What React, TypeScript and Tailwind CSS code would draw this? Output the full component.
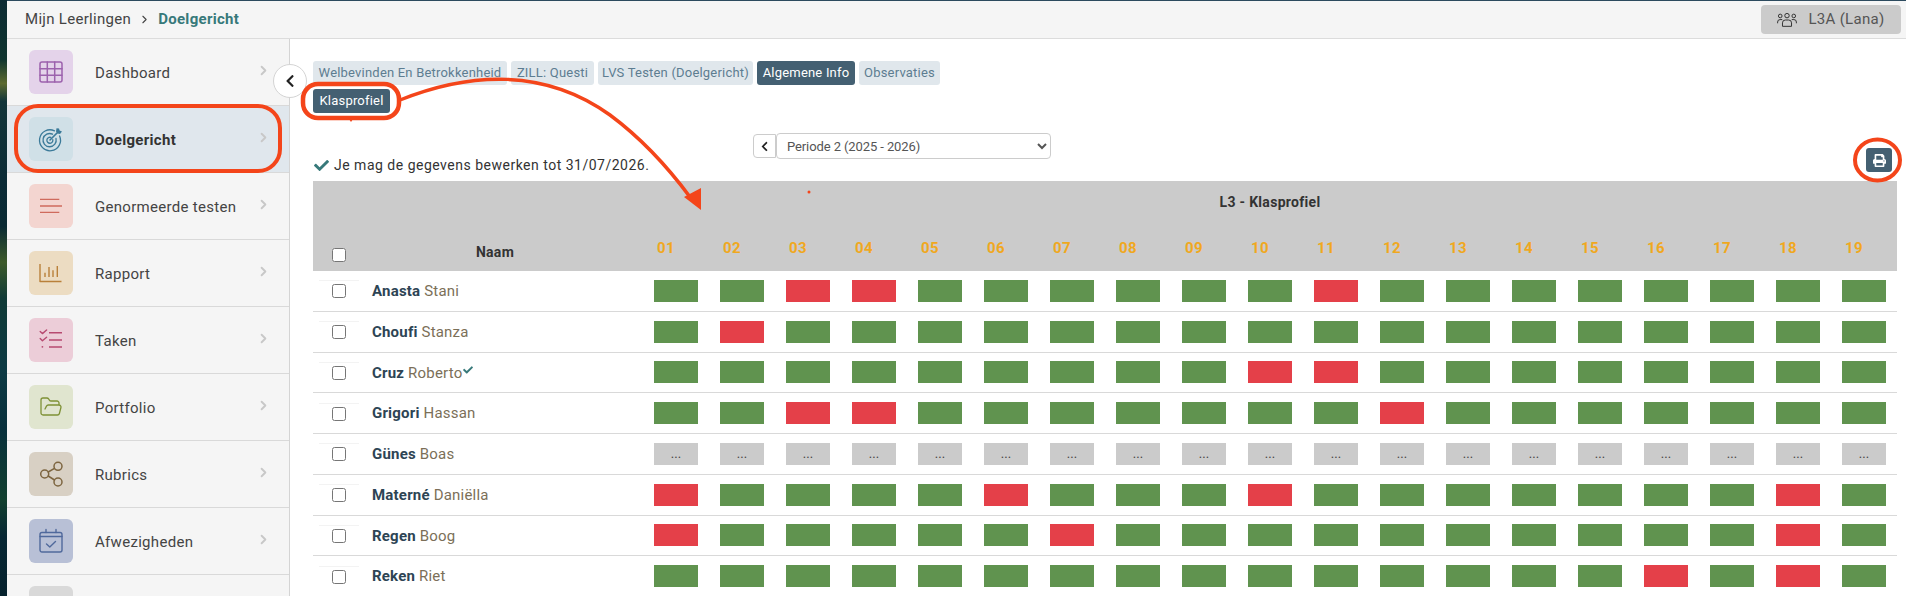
import type { ReactNode } from "react";
import { ChevronRight, FolderOpen } from "lucide-react";
import { FaCheck, FaChevronLeft, FaPrint } from "react-icons/fa";

function Ico({ children, sw = 1.4 }: { children: ReactNode; sw?: number }) {
  return (
    <svg width="24" height="24" viewBox="0 0 24 24" fill="none" stroke="currentColor" strokeWidth={sw} strokeLinecap="round" strokeLinejoin="round" className="overflow-visible">
      {children}
    </svg>
  );
}

const menu: { label: string; icon?: ReactNode; box: string; color: string; active?: boolean }[] = [
  {
    label: "Dashboard",
    box: "bg-[#e4d3ea]",
    color: "text-[#9c62ad]",
    icon: (
      <Ico sw={1.5}>
        <rect x="1" y="2" width="22" height="20" rx="2" />
        <path d="M8.3 2v20M15.7 2v20M1 8.7h22M1 15.3h22" />
      </Ico>
    ),
  },
  {
    label: "Doelgericht",
    box: "bg-[#d0e0e7]",
    color: "text-[#3b7a99]",
    active: true,
    icon: (
      <Ico sw={1.3}>
        <path d="M15.5 3.8A10.5 10.5 0 1 0 20.6 9" />
        <path d="M13.5 7.2A6.6 6.6 0 1 0 17 11.5" />
        <path d="M11.8 10.4A3 3 0 1 0 13.8 12.6" />
        <path d="M11 13L18.5 5.5" strokeWidth="1.6" />
        <path d="M17 4.5L17.5 1.2L20 1.5L20.6 3.4L23 4.5L21 7L18.5 6.5Z" fill="currentColor" stroke="none" />
      </Ico>
    ),
  },
  {
    label: "Genormeerde testen",
    box: "bg-[#f3d5d0]",
    color: "text-[#cf6b5d]",
    icon: (
      <Ico sw={1.3}>
        <path d="M1 5.3h19.3M1 12h22M1 18.3h19.3" strokeLinecap="butt" />
      </Ico>
    ),
  },
  {
    label: "Rapport",
    box: "bg-[#ecdcc2]",
    color: "text-[#b9803a]",
    icon: (
      <Ico sw={1.4}>
        <path d="M1 3v17.5h21.5" strokeLinecap="butt" />
        <path d="M6 11.7V16M10 6v10M14 9.3V16M18.3 5v11" strokeLinecap="butt" />
      </Ico>
    ),
  },
  {
    label: "Taken",
    box: "bg-[#eccdd8]",
    color: "text-[#b74a70]",
    icon: (
      <Ico sw={1.4}>
        <path d="M10 4.7h13M10 12h13M10 19h13" strokeLinecap="butt" />
        <path d="M1.2 3.4L3.4 5.6L7.6 2M1.2 10.6L3.4 12.8L7.6 9.2" />
        <circle cx="3.4" cy="18.8" r="0.9" fill="currentColor" stroke="none" />
      </Ico>
    ),
  },
  { label: "Portfolio", box: "bg-[#e0e5cf]", color: "text-[#7e9136]", icon: <FolderOpen size={24} strokeWidth={1.3} /> },
  {
    label: "Rubrics",
    box: "bg-[#d8d0c4]",
    color: "text-[#7d6540]",
    icon: (
      <Ico sw={1.5}>
        <circle cx="19" cy="4.3" r="4" />
        <circle cx="5.7" cy="12" r="4" />
        <circle cx="19" cy="20" r="4" />
        <path d="M9.2 10L15.5 6.3M9.2 14L15.5 18" />
      </Ico>
    ),
  },
  {
    label: "Afwezigheden",
    box: "bg-[#b8c0d6]",
    color: "text-[#50699c]",
    icon: (
      <Ico sw={1.4}>
        <rect x="1" y="3.5" width="22" height="19.5" rx="2" />
        <path d="M1 7.5h22M7 0.5v3M17 0.5v3" />
        <path d="M7.5 15L10.8 18L16.5 12.5" />
      </Ico>
    ),
  },
  { label: "", box: "bg-[#d9d9d9]", color: "text-[#999]" },
];

const tabs = [
  { label: "Welbevinden En Betrokkenheid", w: "w-[194px]" },
  { label: "ZILL: Questi", w: "w-[83px]" },
  { label: "LVS Testen (Doelgericht)", w: "w-[155px]" },
  { label: "Algemene Info", w: "w-[98px]", active: true },
  { label: "Observaties", w: "w-[81px]" },
];

const columns = ["01", "02", "03", "04", "05", "06", "07", "08", "09", "10", "11", "12", "13", "14", "15", "16", "17", "18", "19"];

const students = [
  { last: "Anasta", first: "Stani", red: ["03", "04", "11"] },
  { last: "Choufi", first: "Stanza", red: ["02"] },
  { last: "Cruz", first: "Roberto", red: ["10", "11"], done: true },
  { last: "Grigori", first: "Hassan", red: ["03", "04", "12"] },
  { last: "Günes", first: "Boas", red: [], empty: true },
  { last: "Materné", first: "Daniëlla", red: ["01", "06", "10", "18"] },
  { last: "Regen", first: "Boog", red: ["01", "07", "18"] },
  { last: "Reken", first: "Riet", red: ["16", "18"] },
];

function GroupIcon() {
  return (
    <svg width="20" height="14" viewBox="0 0 24 17" fill="none" stroke="#333" strokeWidth="1.2" strokeLinejoin="round">
      <circle cx="3.8" cy="3.6" r="2.2" />
      <circle cx="12" cy="3.2" r="2.7" />
      <circle cx="20.2" cy="3.6" r="2.2" />
      <path d="M6.5 16.2v-4.2a3.5 3.5 0 0 1 3.5-3.5h4a3.5 3.5 0 0 1 3.5 3.5v4.2z" />
      <path d="M0.6 12.5v-1.5a3 3 0 0 1 3-3h2.6M23.4 12.5v-1.5a3 3 0 0 0-3-3h-2.6" />
    </svg>
  );
}

function Sidebar() {
  return (
    <div className="w-[283px] shrink-0 bg-[#f5f5f5] border-r border-[#d4d4d4] h-full">
      {menu.map((item, i) => (
        <div key={i} className={`h-[67px] flex items-center pl-[22px] pr-[18px] border-b border-[#d9d9d9] ${item.active ? "bg-[#e0e7ed]" : ""}`}>
          <div className={`w-[44px] h-[44px] shrink-0 rounded-[6px] flex items-center justify-center ${item.box} ${item.color}`}>
            {item.icon}
          </div>
          <span className={`ml-[22px] pt-[2px] flex-1 text-[15px] tracking-[0.3px] ${item.active ? "font-bold text-[#333]" : "text-[#444]"}`}>{item.label}</span>
          {item.label && <ChevronRight size={15} strokeWidth={3} className="text-[#c8c8c8] -mt-[4px]" />}
        </div>
      ))}
    </div>
  );
}

function Tab({ label, w, active }: { label: string; w: string; active?: boolean }) {
  return (
    <div className={`h-[24px] ${w} rounded-[3px] flex items-center justify-center text-[13px] tracking-[0.2px] whitespace-nowrap ${active ? "bg-[#446072] text-white" : "bg-[#e0e7ec] text-[#5d7d91]"}`}>
      {label}
    </div>
  );
}

function ProfileTable() {
  return (
    <div className="ml-[23px] w-[1584px]">
      <div className="h-[90px] bg-[#cbcbcb] flex">
        <div className="w-[330px] shrink-0 flex items-end pb-[8px]">
          <div className="w-[40px] ml-[6px] flex justify-center mb-[1px]">
            <input type="checkbox" className="w-[14px] h-[14px]" readOnly />
          </div>
          <div className="flex-1 text-center font-bold text-[14px] tracking-[0.3px] text-[#333] pr-[12px]">Naam</div>
        </div>
        <div className="flex-1 flex flex-col">
          <div className="h-[42px] flex items-center justify-center font-bold text-[14px] tracking-[0.3px] text-[#333]">L3 - Klasprofiel</div>
          <div className="flex h-[48px] items-center pt-[2px]">
            {columns.map((c) => (
              <div key={c} className="w-[66px] text-center font-bold text-[15px] tracking-[0.5px] text-[#f0a81e] pr-[20px]">{c}</div>
            ))}
          </div>
        </div>
      </div>
      {students.map((s) => (
        <div key={s.last} className="h-[40.75px] flex items-center border-b border-[#d9d9d9]">
          <div className="w-[330px] shrink-0 flex items-center">
            <div className="w-[40px] ml-[6px] flex justify-center border-t border-[#f3f3f3] py-[3px]">
              <input type="checkbox" className="w-[14px] h-[14px]" readOnly />
            </div>
            <div className="ml-[13px] pt-[1px] text-[15px] tracking-[0.2px]">
              <span className="font-bold text-[#2d4454]">{s.last}</span>{" "}
              <span className="text-[#7b6f58]">{s.first}</span>
              {s.done && <FaCheck size={10} className="inline text-[#37797a] ml-[1px] -mt-[8px]" />}
            </div>
          </div>
          {columns.map((c) => (
            <div key={c} className="w-[66px] flex justify-center">
              <div className={`w-[44px] h-[22px] flex items-center justify-center text-[13px] text-[#444] ${s.empty ? "bg-[#cbcbcb]" : s.red.includes(c) ? "bg-[#e44049]" : "bg-[#60934f]"}`}>
                {s.empty ? "..." : ""}
              </div>
            </div>
          ))}
        </div>
      ))}
    </div>
  );
}

function Annotations() {
  return (
    <svg className="absolute left-0 top-0 pointer-events-none" width="1906" height="596" fill="none" stroke="#f4451a">
      <rect x="16" y="106" width="264" height="65" rx="22" strokeWidth="4" />
      <rect x="303" y="84" width="96" height="34" rx="15" strokeWidth="4.5" />
      <ellipse cx="1877.5" cy="160" rx="22.5" ry="20.5" strokeWidth="4" />
      <path d="M400 100C470 72 545 68 610 115C645 141 670 170 690 197" strokeWidth="3.5" />
      <path d="M684 197L701 188L701 210Z" fill="#f4451a" stroke="none" />
      <path d="M349 119L353 119L351 122Z" fill="#f4451a" stroke="none" />
      <circle cx="809" cy="192" r="1.5" fill="#f4451a" stroke="none" />
    </svg>
  );
}

export default function App() {
  return (
    <div className="relative w-[1906px] h-[596px] overflow-hidden flex bg-white font-['Roboto',sans-serif]">
      <div className="w-[7px] shrink-0 bg-[linear-gradient(180deg,#0c2b33_0%,#10352f_10%,#5c6a2f_14%,#12353a_17%,#0b2b36_30%,#0a2a33_38%,#3d5a2a_44%,#103a36_50%,#0d3a44_62%,#08303c_72%,#12402f_84%,#072734_90%,#06222d_100%)]" />
      <div className="flex-1 min-w-0 flex flex-col">
        <div className="h-px shrink-0 bg-[#2c4a5e]" />
        <div className="h-[38px] shrink-0 bg-[#f5f5f5] border-b border-[#dcdcdc] flex items-center pl-[18px] pr-[5px]">
          <span className="text-[15px] tracking-[0.3px] text-[#444]">Mijn Leerlingen</span>
          <ChevronRight size={13} strokeWidth={2} className="mx-[7px] text-[#444]" />
          <span className="text-[15px] font-bold tracking-[0.3px] text-[#37797a]">Doelgericht</span>
          <div className="ml-auto w-[140px] h-[29px] rounded-[4px] bg-[#cbcbcb] flex items-center justify-center gap-[11px] text-[15px] tracking-[0.3px] text-[#555]">
            <GroupIcon />
            L3A (Lana)
          </div>
        </div>
        <div className="flex-1 flex min-h-0">
          <Sidebar />
          <div className="relative flex-1 min-w-0">
            <button className="absolute left-[-17px] top-[25px] w-[34px] h-[34px] rounded-full bg-white border border-[#d4d4d4] flex items-center justify-center text-[#222]">
              <FaChevronLeft size={14} />
            </button>
            <div className="pt-[22px]">
              <div className="ml-[23px] flex gap-[4px]">
                {tabs.map((t) => (
                  <Tab key={t.label} {...t} />
                ))}
              </div>
              <div className="ml-[23px] mt-[4px]">
                <Tab label="Klasprofiel" w="w-[77px]" active />
              </div>
              <div className="h-[68px] relative">
                <div className="absolute left-[463px] top-[21px] flex">
                  <button className="w-[23px] h-[24px] border border-[#ccc] rounded-l-[4px] flex items-center justify-center text-[#222]">
                    <FaChevronLeft size={11} />
                  </button>
                  <select className="w-[275px] h-[26px] -mt-px border border-[#ccc] rounded-[4px] pl-[6px] text-[13px] tracking-[-0.1px] text-[#555] bg-white">
                    <option>Periode 2 (2025 - 2026)</option>
                  </select>
                </div>
                <div className="absolute left-[24px] top-[42px] flex items-center gap-[5px] text-[14px] tracking-[0.5px] text-[#333]">
                  <FaCheck size={15} className="text-[#37797a]" />
                  Je mag de gegevens bewerken tot 31/07/2026.
                </div>
                <button className="absolute left-[1576px] top-[35px] w-[26px] h-[24px] rounded-[3px] bg-[#446072] flex items-center justify-center text-white">
                  <FaPrint size={13} />
                </button>
              </div>
              <ProfileTable />
            </div>
          </div>
        </div>
      </div>
      <Annotations />
    </div>
  );
}
